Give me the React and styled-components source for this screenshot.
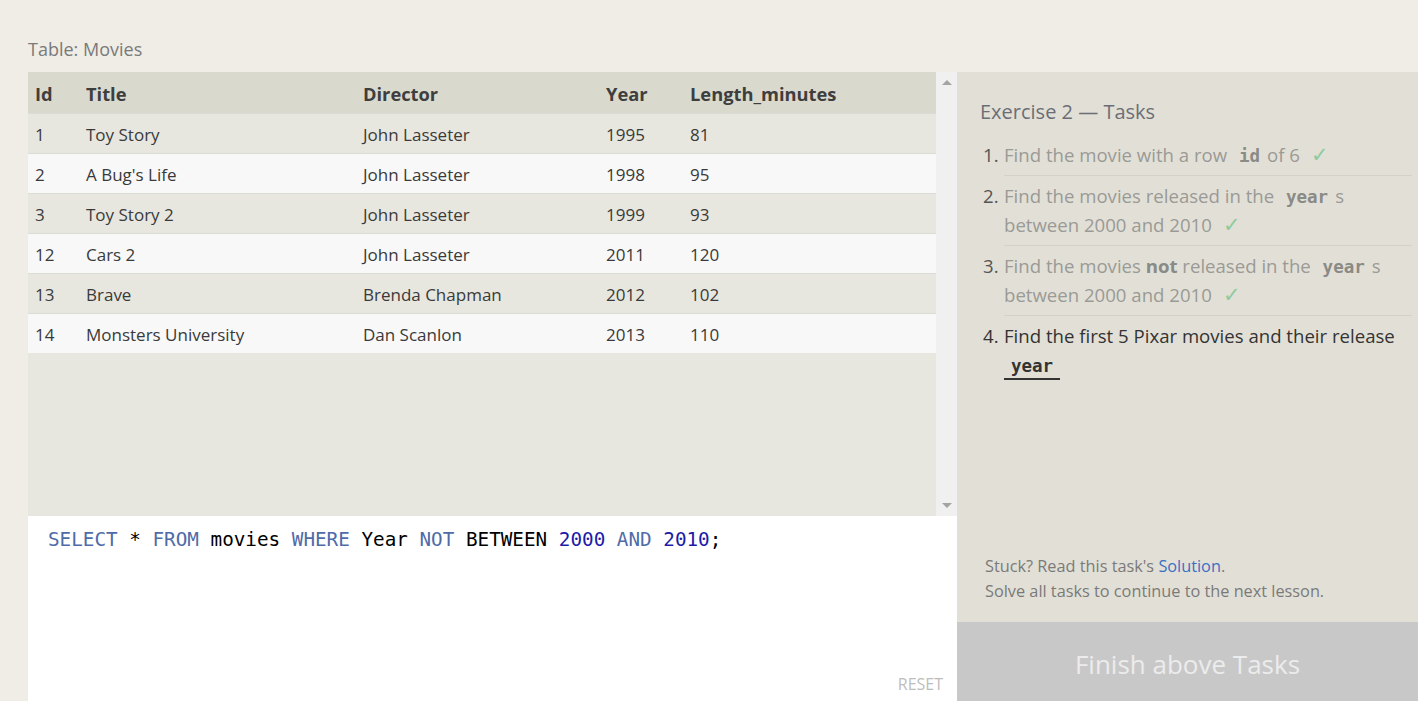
import React from 'react';
import styled, { createGlobalStyle } from 'styled-components';

const GlobalStyle = createGlobalStyle`
  html, body {
    margin: 0;
    padding: 0;
    background: #efede6;
    font-family: "Open Sans", "Liberation Sans", sans-serif;
    overflow: hidden;
  }
`;

const Page = styled.div`
  display: flex;
  height: 701px;
  width: 1418px;
`;

const LeftColumn = styled.div`
  display: flex;
  flex-direction: column;
  width: 929px;
  margin-left: 28px;
`;

const TableLabel = styled.div`
  height: 72px;
  box-sizing: border-box;
  padding-top: 37px;
  font-size: 18px;
  line-height: 24px;
  color: #7a7a7a;
`;

const TablePanel = styled.div`
  display: flex;
  height: 444px;
  background: #e8e7df;
`;

const TableArea = styled.div`
  flex: 1;
`;

const Scrollbar = styled.div`
  width: 21px;
  background: #f0f0f0;
  display: flex;
  flex-direction: column;
  justify-content: space-between;
  align-items: center;
  padding: 8px 0;
  box-sizing: border-box;
`;

const Arrow = styled.div`
  width: 0;
  height: 0;
  border-left: 5px solid transparent;
  border-right: 5px solid transparent;
  ${p => p.$down
    ? 'border-top: 5px solid #a3a3a3;'
    : 'border-bottom: 5px solid #a3a3a3;'}
`;

const Table = styled.table`
  width: 100%;
  table-layout: fixed;
  border-collapse: collapse;
  font-size: 17px;
  color: #333;
`;

const HeadCell = styled.th`
  background: #d9d9ce;
  text-align: left;
  font-weight: 700;
  font-size: 18.3px;
  color: #3e3e3e;
  height: 39px;
  padding: 2px 7px 0;
  width: ${p => p.$w || 'auto'};
`;

const Row = styled.tr`
  background: ${p => (p.$even ? '#f8f8f8' : '#e8e7df')};
  border-top: 1px solid #dcdcd6;
`;

const Cell = styled.td`
  height: 38px;
  padding: 1px 7px 0;
  color: #3a3a3a;
`;

const Editor = styled.div`
  position: relative;
  flex: 1;
  background: #fff;
  padding: 12px 20px;
  box-sizing: border-box;
`;

const Code = styled.pre`
  margin: 0;
  font-family: "DejaVu Sans Mono", "Liberation Mono", monospace;
  font-size: 19.3px;
  line-height: 24px;
  color: #000;
`;

const Kw = styled.span`
  color: #4f6ba8;
`;

const Num = styled.span`
  color: #1c1ca8;
`;

const ResetButton = styled.div`
  position: absolute;
  right: 14px;
  bottom: 6px;
  font-size: 16px;
  color: #bdbdbd;
`;

const RightPanel = styled.div`
  flex: 1;
  margin-top: 72px;
  display: flex;
  flex-direction: column;
  background: #e2e0d6;
`;

const TasksBox = styled.div`
  flex: 1;
  padding: 26px 6px 0 23px;
  display: flex;
  flex-direction: column;
`;

const TasksTitle = styled.div`
  font-size: 20px;
  line-height: 28px;
  color: #6b6e76;
  margin-bottom: 9px;
`;

const TaskList = styled.ol`
  margin: 0;
  padding: 0 0 0 24px;
  list-style: none;
  counter-reset: task;
`;

const TaskItem = styled.li`
  position: relative;
  counter-increment: task;
  padding: 5px 0;
  font-size: 18.6px;
  line-height: 29.5px;
  color: ${p => (p.$done ? '#9a9a96' : '#333')};
  border-bottom: ${p => (p.$last ? 'none' : '1px solid #d4d1c7')};

  &::before {
    content: counter(task) ".";
    position: absolute;
    left: -21px;
    color: ${p => (p.$done ? '#555' : '#333')};
  }
`;

const Mono = styled.code`
  font-family: "DejaVu Sans Mono", "Liberation Mono", monospace;
  font-weight: 700;
  font-size: 17.5px;
  line-height: 1;
  padding: 0 7px;
  color: ${p => (p.$active ? '#333' : '#8a8a86')};
  ${p => p.$active && 'border-bottom: 2px solid #333; padding-bottom: 2px;'}
`;

const Check = styled.span`
  color: #8fca9c;
  margin-left: 11px;
  font-family: "DejaVu Sans", sans-serif;
  font-size: 21px;
  font-weight: 300;
  line-height: 1;
`;

const Strong = styled.b`
  color: #8a8a86;
`;

const HelpText = styled.div`
  font-size: 16.3px;
  line-height: 25px;
  color: #7a7a7a;
  padding: 0 0 18px 28px;
`;

const Link = styled.span`
  color: #3a6fc4;
`;

const FinishButton = styled.div`
  height: 79px;
  box-sizing: border-box;
  padding-top: 5px;
  background: #c8c8c8;
  color: #ececec;
  font-size: 26px;
  display: flex;
  align-items: center;
  justify-content: center;
`;

const movies = [
  [1, 'Toy Story', 'John Lasseter', 1995, 81],
  [2, "A Bug's Life", 'John Lasseter', 1998, 95],
  [3, 'Toy Story 2', 'John Lasseter', 1999, 93],
  [12, 'Cars 2', 'John Lasseter', 2011, 120],
  [13, 'Brave', 'Brenda Chapman', 2012, 102],
  [14, 'Monsters University', 'Dan Scanlon', 2013, 110],
];

export default function App() {
  return (
    <Page>
      <GlobalStyle />
      <LeftColumn>
        <TableLabel>Table: Movies</TableLabel>
        <TablePanel>
          <TableArea>
            <Table>
              <thead>
                <tr>
                  <HeadCell $w="37px">Id</HeadCell>
                  <HeadCell $w="263px">Title</HeadCell>
                  <HeadCell $w="229px">Director</HeadCell>
                  <HeadCell $w="70px">Year</HeadCell>
                  <HeadCell>Length_minutes</HeadCell>
                </tr>
              </thead>
              <tbody>
                {movies.map((m, i) => (
                  <Row key={m[0]} $even={i % 2 === 1}>
                    {m.map((v, j) => <Cell key={j}>{v}</Cell>)}
                  </Row>
                ))}
              </tbody>
            </Table>
          </TableArea>
          <Scrollbar>
            <Arrow />
            <Arrow $down />
          </Scrollbar>
        </TablePanel>
        <Editor>
          <Code>
            <Kw>SELECT</Kw> * <Kw>FROM</Kw> movies <Kw>WHERE</Kw> Year <Kw>NOT</Kw> BETWEEN <Num>2000</Num> <Kw>AND</Kw> <Num>2010</Num>;
          </Code>
          <ResetButton>RESET</ResetButton>
        </Editor>
      </LeftColumn>
      <RightPanel>
        <TasksBox>
          <TasksTitle>Exercise 2 — Tasks</TasksTitle>
          <TaskList>
            <TaskItem $done>
              Find the movie with a row <Mono>id</Mono>of 6<Check>✓</Check>
            </TaskItem>
            <TaskItem $done>
              Find the movies released in the <Mono>year</Mono>s between 2000 and 2010<Check>✓</Check>
            </TaskItem>
            <TaskItem $done>
              Find the movies <Strong>not</Strong> released in the <Mono>year</Mono>s between 2000 and 2010<Check>✓</Check>
            </TaskItem>
            <TaskItem $last>
              Find the first 5 Pixar movies and their release <Mono $active>year</Mono>
            </TaskItem>
          </TaskList>
        </TasksBox>
        <HelpText>
          Stuck? Read this task's <Link>Solution</Link>.<br />
          Solve all tasks to continue to the next lesson.
        </HelpText>
        <FinishButton>Finish above Tasks</FinishButton>
      </RightPanel>
    </Page>
  );
}
